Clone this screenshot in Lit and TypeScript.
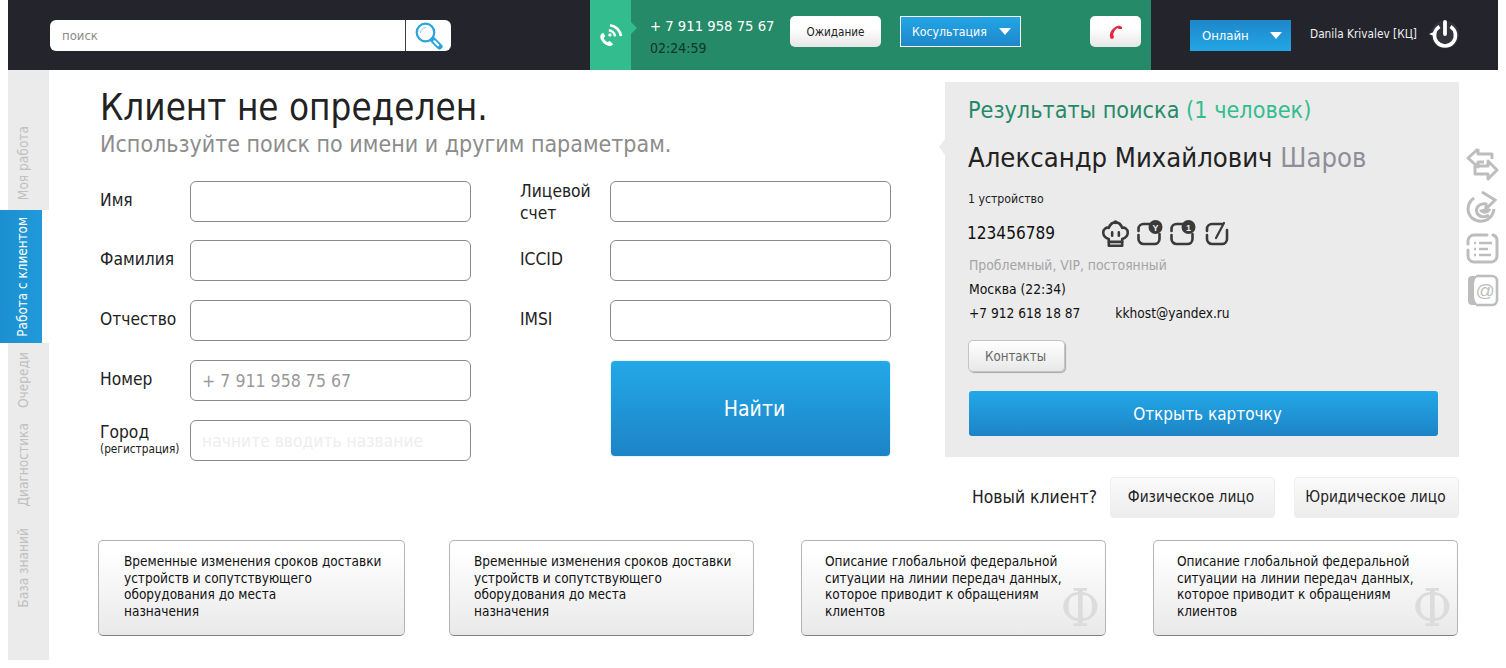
import { LitElement, html, css, svg } from "lit";
import { customElement } from "lit/decorators.js";

const caret = html`<svg class="caret" width="12" height="7" viewBox="0 0 12 7"><path d="M0 0h12L6 7z" fill="#fff"/></svg>`;

const S = "#3a3a3a";
const crown = svg`<g fill="none" stroke="${S}" stroke-width="2.300" stroke-linejoin="round" stroke-linecap="round">
  <path d="M7 18c-3-1-5-3-5-6 0-3 3-5 5-4 1-3 3-5 6-5s5 2 6 5c2-1 5 1 5 4 0 3-2 5-5 6v6H7z"/><path d="M7 20.500h12M10 12v3M16 12v3"/></g><circle cx="13" cy="3" r="1.800" fill="${S}"/>`;

const devBadge = (c: string) => html`<svg width="26" height="26" viewBox="0 0 26 26">
  <path d="M1.500 11V9a5 5 0 0 1 5-5h6M1.500 15v4a5 5 0 0 0 5 5h11a5 5 0 0 0 5-5v-5" fill="none" stroke="${S}" stroke-width="2.600" stroke-linecap="round"/>
  <circle cx="18.500" cy="7" r="7" fill="${S}"/>
  <text x="18.500" y="10.500" text-anchor="middle" font-size="9" font-weight="700" fill="#eee" font-family="Liberation Sans, sans-serif">${c}</text>
</svg>`;

@customElement("app-root")
export class AppRoot extends LitElement {
  static styles = css`
    :host { display: block; width: 1506px; height: 668px; overflow: hidden; background: #fff; position: relative;
      font-family: "DejaVu Sans", Tahoma, sans-serif; font-stretch: condensed; color: #222; }
    * { box-sizing: border-box; }
    .top { margin: 0 8px; height: 70px; background: #24242c; display: flex; }
    .search { width: 401px; height: 31px; margin: 20px 0 0 42px; background: #fff; border-radius: 6px; display: flex; }
    .search .q { flex: 1; font-size: 13px; line-height: 16px; color: #8b8b8b; padding: 8px 0 0 12px; border-right: 1px solid #3d3d44; }
    .search .go { width: 45px; display: flex; align-items: center; justify-content: center; }
    .call { margin-left: 139px; width: 561px; background: #258a68; display: flex; position: relative; }
    .call-ico { width: 41px; background: #33bd8e; position: relative; display: flex; align-items: center; justify-content: center; }
    .call-ico::after { content: ""; position: absolute; left: 41px; top: 22px; border: 6px solid transparent; border-left-color: #33bd8e; border-right-width: 0; }
    .nums { width: 160px; padding: 17px 0 0 19px; }
    .nums .ph { font-size: 14.700px; line-height: 18px; color: #fff; white-space: nowrap; }
    .nums .tm { font-size: 14px; line-height: 18px; margin-top: 4px; color: #10352a; }
    .wbtn { height: 31px; margin-top: 16px; border-radius: 5px; background: linear-gradient(#fff 40%, #e6e6e6); color: #222; font-size: 11.600px; display: flex; align-items: center; justify-content: center; }
    .wait { width: 91px; margin-left: -1px; }
    .sel { display: flex; align-items: center; justify-content: space-between; background: linear-gradient(#23a6e6, #1d87c9); color: #fff; font-size: 13px; }
    .cons { width: 121px; height: 31px; margin: 16px 0 0 19px; border: 1px solid #fff; padding: 0 9px 0 11px; font-size: 12.200px; }
    .hang { width: 51px; margin-left: 69px; }
    .user { flex: 1; display: flex; }
    .online { width: 101px; height: 31px; margin: 20px 0 0 39px; padding: 0 9px 0 12px; background: linear-gradient(#1d87c9, #23a6e6); }
    .uname { color: #f0f0f0; font-size: 11.750px; margin: 26px 0 0 19px; white-space: nowrap; line-height: 16px; }
    .power { margin: 19px 0 0 11px; }

    .body { display: flex; height: 598px; }
    .side { width: 49px; flex: none; height: 590px; display: flex; flex-direction: column; }
    .tab { margin-left: 8px; width: 41px; background: #ebebeb; color: #c0c0c0; font-size: 13.600px; display: flex; align-items: flex-end; justify-content: flex-start; padding-left: 6px; }
    .tab span { writing-mode: vertical-rl; transform: rotate(180deg); white-space: nowrap; line-height: 18px; }
    .tab.a { height: 140px; padding-bottom: 10px; }
    .tab.b { margin-left: 0; width: 42px; height: 133px; background: linear-gradient(90deg, #1d8fd0, #1f9ada); color: #fff; padding-left: 14px; padding-bottom: 6px; font-size: 13.400px; }
    .tab.c { height: 74px; padding-bottom: 9px; }
    .tab.d { height: 99px; padding-bottom: 9px; }
    .tab.e { flex: 1; padding-bottom: 52px; }

    .main { flex: 1; min-width: 0; display: flex; }
    .center { width: 1410px; flex: none; display: flex; flex-direction: column; }
    .upper { display: flex; height: 470px; }
    .left { width: 896px; padding: 14px 0 0 51px; }
    h1 { margin: 0; font-weight: 400; font-size: 36.500px; line-height: 48px; color: #222; white-space: nowrap; }
    .sub { font-size: 23px; line-height: 28px; color: #8c8c8c; white-space: nowrap; margin-top: -2px; }
    .form { display: grid; grid-template-columns: 371px 281px; column-gap: 49px; margin-top: 23px; }
    .col { display: flex; flex-direction: column; gap: 19px; }
    .col > :nth-child(2) { margin-top: -1px; }
    .row { display: flex; height: 41px; align-items: center; }
    .row label { width: 90px; flex: none; font-size: 17.300px; line-height: 22px; color: #222; padding-bottom: 4px; }
    .row label.two { padding-bottom: 0; }
    .row label.city { padding-bottom: 4px; }
    .row label small { display: block; font-size: 11.750px; line-height: 13px; }
    .inp { width: 281px; height: 41px; flex: none; background: #fff; border: 1px solid #8a8a8a; border-radius: 6px; font-size: 17.600px; color: #999; padding: 0 11px; display: flex; align-items: center; white-space: nowrap; }
    .inp.pale { color: #eeeeee; font-size: 17.300px; }
    .form .r .row { width: 371px; }
    .find { margin: 1px 0 0 91px; width: 279px; height: 95px; border-radius: 4px; background: linear-gradient(#23a8e8, #1c84c6); color: #fff; font-size: 21px; padding-left: 8px; display: flex; align-items: center; justify-content: center; box-shadow: 0 0 2px #9fd4ee; }

    .right { width: 514px; flex: none; padding-top: 12px; }
    .panel { height: 375px; background: #ebebeb; position: relative; padding: 13px 22px 0 23px; }
    .panel::before { content: ""; position: absolute; left: -6px; top: 57px; border: 8px solid transparent; border-right-color: #ebebeb; border-left-width: 0; border-right-width: 6px; }
    .rt { font-size: 23.200px; line-height: 30px; color: #258a68; white-space: nowrap; }
    .rt span { color: #33bd8e; }
    .nm { font-size: 27.200px; line-height: 36px; margin-top: 15px; white-space: nowrap; color: #222; }
    .nm span { color: #8e8e98; }
    .dev { font-size: 12.200px; line-height: 16px; margin-top: 15px; }
    .idrow { display: flex; align-items: center; margin-top: 9px; height: 34px; margin-left: -1px; }
    .id { font-size: 17.100px; width: 134px; color: #111; }
    .icons { display: flex; align-items: center; }
    .icons .c { width: 36px; }
    .icons .d { width: 33px; }
    .icons .e { width: 35px; }
    .icons svg { display: block; }
    .tags { font-size: 13.800px; color: #a5a5a5; line-height: 18px; margin: 6px 0 0 1px; }
    .ct { font-size: 13.800px; line-height: 18px; color: #111; margin: 6px 0 0 1px; white-space: nowrap; }
    .ct2 { display: flex; gap: 35px; margin-top: 6px; font-size: 13.600px; }
    .contacts { width: 97px; height: 32px; margin: 18px 0 0 0; padding-right: 2px; border: 1px solid #c4c4c4; border-radius: 5px; background: linear-gradient(#fff, #e8e8e8); box-shadow: 1px 1px 1px #aaa; color: #666; font-size: 13.200px; display: flex; align-items: center; justify-content: center; }
    .open { margin: 19px 0 0 1px; width: 469px; height: 45px; border-radius: 3px; background: linear-gradient(#23a8e8, #1c84c6); color: #fff; font-size: 17px; padding-left: 8px; display: flex; align-items: center; justify-content: center; }
    .newc { display: flex; align-items: center; margin-top: 20px; height: 41px; padding-left: 27px; font-size: 17.400px; white-space: nowrap; }
    .newc .lb { margin-right: 13px; padding-bottom: 2px; }
    .pbtn { height: 41px; border: 1px solid #eeeeee; border-radius: 4px; background: linear-gradient(#fbfbfb, #ececec); font-size: 15.300px; padding-bottom: 2px; display: flex; align-items: center; justify-content: center; }
    .pbtn.f { width: 165px; margin-right: 19px; padding-right: 3px; }
    .pbtn.u { width: 165px; padding-right: 2px; }

    .notes { display: grid; grid-template-columns: 351px 352px 352px 305px; margin: 0 0 0 49px; }
    .note { width: 305px; height: 96px; position: relative; border: 1px solid #b4b4b4; border-bottom-color: #808080; border-radius: 5px; background: linear-gradient(#fff 10%, #e9e9e9); font-size: 13.500px; line-height: 16.700px; color: #111; padding: 12px 10px 0 23px; }
    .note.n1 { width: 307px; padding-left: 25px; }
    .note.n2 { padding-left: 24px; }
    .wm { position: absolute; right: 5px; bottom: 7px; font-family: "DejaVu Serif", serif; font-size: 53px; line-height: 40px; color: #dcdcdc; }

    .rail { flex: 1; display: flex; flex-direction: column; padding: 77px 0 0 7px; gap: 9px; }
  `;

  render() {
    const R = "#bdbdbd";
    return html`
      <div class="top">
        <div class="search">
          <div class="q">поиск</div>
          <div class="go"><svg width="28" height="28" viewBox="0 0 28 28" fill="none">
            <circle cx="10.500" cy="10.500" r="8.800" stroke="#2aa3de" stroke-width="2.200"/>
            <path d="M5.500 11a5.500 5.500 0 0 1 5.500-5.500" stroke="#2aa3de" stroke-width="1" opacity=".5"/>
            <path d="M18 18l6.500 6.500" stroke="#2aa3de" stroke-width="6" stroke-linecap="round"/>
            <path d="M19.300 19.300l3.900 3.900" stroke="#fff" stroke-width="2.200" stroke-linecap="round"/>
          </svg></div>
        </div>
        <div class="call">
          <div class="call-ico"><svg width="29" height="29" viewBox="0 0 26 26" fill="none">
            <path d="M6.500 10.500c-2.500 1-3.300 3-2.300 5.500 1.400 3.300 3.600 5.400 6.800 6.300 2 .6 3.500-.2 4.300-1.700l-3.100-2.700-1.800 1c-1.600-.6-3-2.100-3.500-3.700l1.300-1.800z" fill="#fff"/>
            <path d="M11.500 8.300a6 6 0 0 1 5.500 5.500" stroke="#fff" stroke-width="2.200"/>
            <path d="M12.500 3.800a11 11 0 0 1 9.800 9.800" stroke="#fff" stroke-width="2.400"/>
            <circle cx="12.500" cy="12.500" r="1.500" fill="#fff"/>
          </svg></div>
          <div class="nums"><div class="ph">+ 7 911 958 75 67</div><div class="tm">02:24:59</div></div>
          <div class="wbtn wait">Ожидание</div>
          <div class="sel cons"><span>Косультация</span>${caret}</div>
          <div class="wbtn hang"><svg width="16" height="16" viewBox="0 0 18 18"><path d="M3 16.500c-2-4-.8-10 6.500-14 2-.9 5-.9 6.500 1.500l-.5 1.500-3.500.2-1.300-1.300C8 6 6 9 5.800 12.500l1 1.500-1 2.500z" fill="#e5283c"/></svg></div>
        </div>
        <div class="user">
          <div class="sel online"><span>Онлайн</span>${caret}</div>
          <div class="uname">Danila Krivalev [КЦ]</div>
          <svg class="power" width="31" height="31" viewBox="0 0 31 31" fill="none">
            <circle cx="17" cy="15.500" r="14" fill="#33333b"/>
            <path d="M11.500 7.500a10.500 10.500 0 1 0 11 0" stroke="#fff" stroke-width="3.600"/>
            <path d="M17 3v12" stroke="#fff" stroke-width="3.800" stroke-linecap="round"/>
            <path d="M1 15l6-2.500v5z" fill="#fff"/>
          </svg>
        </div>
      </div>
      <div class="body">
        <div class="side">
          <div class="tab a"><span>Моя работа</span></div>
          <div class="tab b"><span>Работа с клиентом</span></div>
          <div class="tab c"><span>Очереди</span></div>
          <div class="tab d"><span>Диагностика</span></div>
          <div class="tab e"><span>База знаний</span></div>
        </div>
        <div class="main">
          <div class="center">
            <div class="upper">
              <div class="left">
                <h1>Клиент не определен.</h1>
                <div class="sub">Используйте поиск по имени и другим параметрам.</div>
                <div class="form">
                  <div class="col">
                    <div class="row"><label>Имя</label><div class="inp"></div></div>
                    <div class="row"><label>Фамилия</label><div class="inp"></div></div>
                    <div class="row"><label>Отчество</label><div class="inp"></div></div>
                    <div class="row"><label>Номер</label><div class="inp">+ 7 911 958 75 67</div></div>
                    <div class="row"><label class="city">Город<small>(регистрация)</small></label><div class="inp pale">начните вводить название</div></div>
                  </div>
                  <div class="col r">
                    <div class="row"><label class="two">Лицевой счет</label><div class="inp"></div></div>
                    <div class="row"><label>ICCID</label><div class="inp"></div></div>
                    <div class="row"><label>IMSI</label><div class="inp"></div></div>
                    <div class="find">Найти</div>
                  </div>
                </div>
              </div>
              <div class="right">
                <div class="panel">
                  <div class="rt">Результаты поиска <span>(1 человек)</span></div>
                  <div class="nm">Александр Михайлович <span>Шаров</span></div>
                  <div class="dev">1 устройство</div>
                  <div class="idrow">
                    <div class="id">123456789</div>
                    <div class="icons">
                      <div class="c"><svg width="29" height="29" viewBox="0 0 26 26">${crown}</svg></div>
                      <div class="d">${devBadge("Y")}</div>
                      <div class="e">${devBadge("1")}</div>
                      <svg width="24" height="26" viewBox="0 0 24 26" fill="none" stroke="${S}" stroke-width="2.600" stroke-linecap="round">
                        <path d="M2 11V9a5 5 0 0 1 5-5h10M22 10v9a5 5 0 0 1-5 5H7a5 5 0 0 1-5-5v-4"/><path d="M11 18l8-15" stroke-width="2.200"/>
                      </svg>
                    </div>
                  </div>
                  <div class="tags">Проблемный, VIP, постоянный</div>
                  <div class="ct">Москва (22:34)</div>
                  <div class="ct ct2"><span>+7 912 618 18 87</span><span>kkhost@yandex.ru</span></div>
                  <div class="contacts">Контакты</div>
                  <div class="open">Открыть карточку</div>
                </div>
                <div class="newc">
                  <span class="lb">Новый клиент?</span>
                  <div class="pbtn f">Физическое лицо</div>
                  <div class="pbtn u">Юридическое лицо</div>
                </div>
              </div>
            </div>
            <div class="notes">
              <div class="note n1">Временные изменения сроков доставки устройств и сопутствующего оборудования до места<br>назначения</div>
              <div class="note n2">Временные изменения сроков доставки устройств и сопутствующего оборудования до места<br>назначения</div>
              <div class="note">Описание глобальной федеральной ситуации на линии передач данных, которое приводит к обращениям клиентов<span class="wm">Ф</span></div>
              <div class="note">Описание глобальной федеральной ситуации на линии передач данных, которое приводит к обращениям клиентов<span class="wm">Ф</span></div>
            </div>
          </div>
          <div class="rail">
            <svg width="33" height="34" viewBox="0 0 33 34" fill="none" stroke="${R}" stroke-width="3" stroke-linejoin="round">
              <path d="M12 2L2 11l10 9v-5h6M12 2v5h14v5"/><path d="M22 14l9 9-9 9v-5H9v-8h13z"/>
            </svg>
            <svg width="33" height="33" viewBox="0 0 33 33" fill="none" stroke="${R}" stroke-width="3">
              <path d="M16 2l13 8-9 9v-5c-7-1-11 4-9 9 2 4 8 5 12 2"/><path d="M8 8C1 13 0 22 6 28c6 5 16 4 20-3 1-2 2-4 2-6" />
              <path d="M13 20l8-2 4 1c-1 5-9 7-12 1z" fill="${R}" stroke="none"/>
            </svg>
            <svg width="33" height="33" viewBox="0 0 33 33" fill="none" stroke="${R}" stroke-width="3" stroke-linecap="round">
              <path d="M2 12V9a6 6 0 0 1 6-6h13M27 3a6 6 0 0 1 4 6v15a6 6 0 0 1-6 6H8a6 6 0 0 1-6-6v-6"/>
              <path d="M8 11h2M13 11h13M8 17h2M13 17h9M8 23h2M13 23h12" stroke-width="2.400" stroke-linecap="butt"/>
            </svg>
            <svg width="33" height="33" viewBox="0 0 33 33" fill="none">
              <path d="M6 2h6C8 5 8 8 8 16s0 11 4 15H6a4 4 0 0 1-4-4V6a4 4 0 0 1 4-4z" fill="${R}"/>
              <path d="M10 2h16a5 5 0 0 1 5 5v19a5 5 0 0 1-5 5H10" stroke="${R}" stroke-width="2.600"/>
              <text x="19" y="23" text-anchor="middle" font-size="19" font-style="italic" fill="${R}" font-family="Liberation Sans, sans-serif">@</text>
            </svg>
          </div>
        </div>
      </div>
    `;
  }
}
